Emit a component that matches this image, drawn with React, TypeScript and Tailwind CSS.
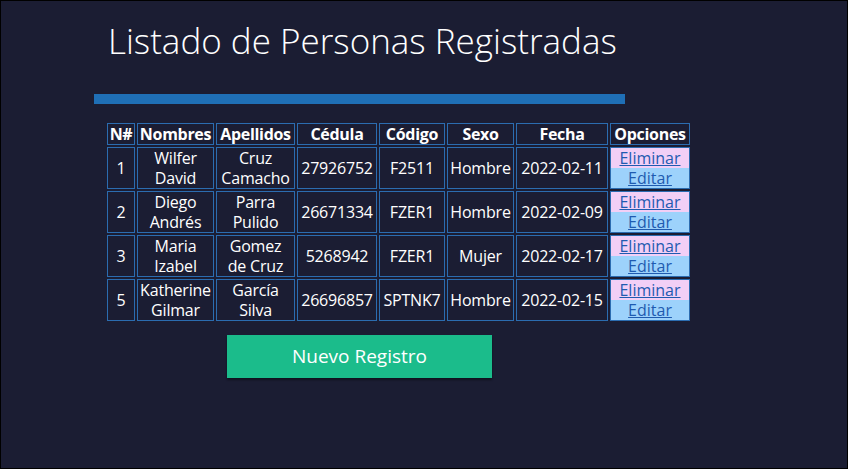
const personas = [
  { n: 1, nombres: ['Wilfer', 'David'], apellidos: ['Cruz', 'Camacho'], cedula: '27926752', codigo: 'F2511', sexo: 'Hombre', fecha: '2022-02-11' },
  { n: 2, nombres: ['Diego', 'Andrés'], apellidos: ['Parra', 'Pulido'], cedula: '26671334', codigo: 'FZER1', sexo: 'Hombre', fecha: '2022-02-09' },
  { n: 3, nombres: ['Maria', 'Izabel'], apellidos: ['Gomez', 'de Cruz'], cedula: '5268942', codigo: 'FZER1', sexo: 'Mujer', fecha: '2022-02-17' },
  { n: 5, nombres: ['Katherine', 'Gilmar'], apellidos: ['García', 'Silva'], cedula: '26696857', codigo: 'SPTNK7', sexo: 'Hombre', fecha: '2022-02-15' },
]

const th = 'border border-[#2b6cb0] p-0 leading-5 font-bold text-center whitespace-nowrap tracking-[-0.3px]'
const td = 'border border-[#2b6cb0] p-0 leading-5 text-center whitespace-nowrap tracking-[-0.2px]'

export default function App() {
  return (
    <div
      className="w-[848px] h-[469px] border border-black bg-[#1b1d33] text-white overflow-hidden"
      style={{ fontFamily: '"Open Sans", "Noto Sans", sans-serif' }}
    >
      {/* Title */}
      <h1 className="ml-[107px] mt-[18px] text-[35px] leading-[44px] font-light">
        Listado de Personas Registradas
      </h1>

      {/* Divider bar */}
      <div className="ml-[93px] mt-[31px] w-[531px] h-[10px] bg-[#1f6fb6]" />

      {/* Table */}
      <table className="ml-[104px] mt-[17px] border-separate border-spacing-[2px] text-[16px]">
        <thead>
          <tr>
            <th className={`${th} w-[28px]`}>N#</th>
            <th className={`${th} w-[77px]`}>Nombres</th>
            <th className={`${th} w-[79px]`}>Apellidos</th>
            <th className={`${th} w-[80px]`}>Cédula</th>
            <th className={`${th} w-[66px]`}>Código</th>
            <th className={`${th} w-[67px]`}>Sexo</th>
            <th className={`${th} w-[92px]`}>Fecha</th>
            <th className={`${th} w-[80px]`}>Opciones</th>
          </tr>
        </thead>
        <tbody>
          {personas.map((p) => (
            <tr key={p.n}>
              <td className={td}>{p.n}</td>
              <td className={td}>
                {p.nombres[0]}
                <br />
                {p.nombres[1]}
              </td>
              <td className={td}>
                {p.apellidos[0]}
                <br />
                {p.apellidos[1]}
              </td>
              <td className={td}>{p.cedula}</td>
              <td className={td}>{p.codigo}</td>
              <td className={td}>{p.sexo}</td>
              <td className={td}>{p.fecha}</td>
              <td className="border border-[#2b6cb0] p-0 leading-5 text-center">
                <a href="#" className="block bg-[#f2cff6] text-[#1f5bb0] underline">
                  Eliminar
                </a>
                <a href="#" className="block bg-[#9dd2fb] text-[#1f5bb0] underline">
                  Editar
                </a>
              </td>
            </tr>
          ))}
        </tbody>
      </table>

      {/* Button */}
      <button className="ml-[226px] mt-[12px] w-[265px] h-[43px] bg-[#1bbc8b] text-white text-[19px] shadow-[0_2px_2px_rgba(0,0,0,0.4)]">
        Nuevo Registro
      </button>
    </div>
  )
}
